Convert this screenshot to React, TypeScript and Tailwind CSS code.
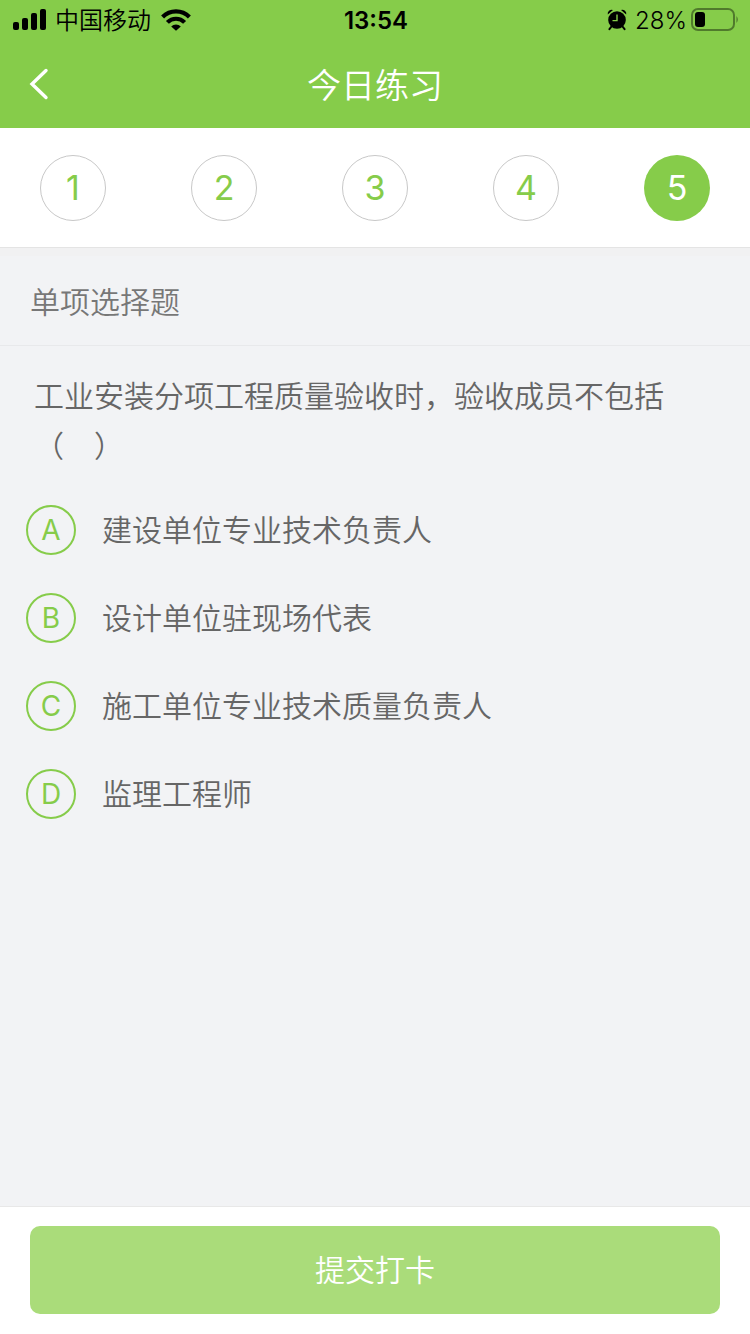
import { useState } from 'react'

const questions = [1, 2, 3, 4, 5]

const options = [
  { key: 'A', text: '建设单位专业技术负责人' },
  { key: 'B', text: '设计单位驻现场代表' },
  { key: 'C', text: '施工单位专业技术质量负责人' },
  { key: 'D', text: '监理工程师' }
]

function SignalIcon() {
  return (
    <svg width="34" height="22" viewBox="0 0 34 22" aria-hidden="true">
      <rect x="0" y="13" width="6" height="8" rx="2" />
      <rect x="9" y="9" width="6" height="12" rx="2" />
      <rect x="18" y="4" width="6" height="17" rx="2" />
      <rect x="27" y="0" width="6" height="21" rx="2" />
    </svg>
  )
}

function WifiIcon() {
  return (
    <svg width="30" height="22" viewBox="0 0 30 22" aria-hidden="true">
      <g fill="none" stroke="#000" strokeWidth="4.2">
        <path d="M1.6 8 A19 19 0 0 1 28.4 8" />
        <path d="M6.4 13.4 A12 12 0 0 1 23.6 13.4" />
      </g>
      <path d="M15 21.8 L10.2 17.4 A6.8 6.8 0 0 1 19.8 17.4 Z" />
    </svg>
  )
}

function AlarmIcon() {
  return (
    <svg width="20" height="22" viewBox="0 0 20 22" aria-hidden="true">
      <circle cx="10" cy="11" r="8.8" />
      <path d="M0.8 5.6 A4 4 0 0 1 6 0.9 Z M19.2 5.6 A4 4 0 0 0 14 0.9 Z" />
      <path d="M4.5 17.5 L2.4 20.2 M15.5 17.5 L17.6 20.2" stroke="#000" strokeWidth="2" strokeLinecap="round" />
      <path d="M10 5.5 V11.6 H5.5" fill="none" stroke="#86cc4a" strokeWidth="1.4" />
    </svg>
  )
}

function BatteryIcon() {
  return (
    <svg width="48" height="24" viewBox="0 0 48 24" aria-hidden="true">
      <rect x="1" y="1" width="42" height="21" rx="6" fill="none" stroke="#000" strokeOpacity="0.4" strokeWidth="2" />
      <rect x="4" y="4" width="10" height="15" rx="3" />
      <path d="M45.5 8 Q48 11.5 45.5 15 Z" fillOpacity="0.45" />
    </svg>
  )
}

function StatusBar() {
  return (
    <div className="grid h-10 grid-cols-[1fr_auto_1fr] items-center pl-[13px] pr-[11px] text-2xl leading-8 text-black">
      <div className="flex items-center gap-2">
        <SignalIcon />
        <span className="pr-[2px] pt-[2px] font-[350]">中国移动</span>
        <WifiIcon />
      </div>
      <span className="pt-[2px] font-semibold">13:54</span>
      <div className="flex items-center justify-end gap-1">
        <AlarmIcon />
        <span className="ml-1 pt-[2px] font-[350]">28%</span>
        <BatteryIcon />
      </div>
    </div>
  )
}

export default function App() {
  const [current, setCurrent] = useState(5)
  const [answer, setAnswer] = useState('')

  return (
    <div className="flex min-h-screen flex-col bg-[#f2f3f5] font-['Inter','Noto_Sans_CJK_SC',sans-serif] font-[350] text-[#666]">
      <header className="bg-[#86cc4a]">
        <StatusBar />
        <div className="grid h-[88px] grid-cols-[1fr_auto_1fr] items-center px-7">
          <button type="button" aria-label="返回" className="justify-self-start">
            <svg width="22" height="32" viewBox="0 0 22 32" aria-hidden="true">
              <path d="M18 2.5 L4 16 L18 29.5" fill="none" stroke="#fff" strokeWidth="3.4" strokeLinecap="round" />
            </svg>
          </button>
          <h1 className="pt-[2px] text-[34px] font-[350] text-white">今日练习</h1>
        </div>
      </header>

      <nav className="flex h-[120px] items-center justify-between border-b border-[#e4e4e4] bg-white px-10">
        {questions.map((n) => (
          <button
            key={n}
            type="button"
            onClick={() => setCurrent(n)}
            className={
              n === current
                ? 'size-[66px] rounded-full bg-[#86cc4a] text-[34px] font-normal text-white'
                : 'size-[66px] rounded-full border border-[#c8c8c8] text-[34px] font-normal text-[#86cc4a]'
            }
          >
            {n}
          </button>
        ))}
      </nav>

      <main className="flex-1">
        <h2
          id="question-type"
          className="flex h-[98px] items-center border-b border-t-8 border-b-[#e8e9eb] border-t-[#f1f1f2] px-[30px] pt-1 text-[30px] font-[350] text-[#777]"
        >
          单项选择题
        </h2>

        <div role="radiogroup" aria-labelledby="question-type" className="px-[26px] pt-[25px]">
          <p className="px-2 text-[30px] leading-[50px]">
            工业安装分项工程质量验收时，验收成员不包括<br />（　）
          </p>
          <div className="flex flex-col gap-[38px] pt-[34px]">
            {options.map((option) => (
              <label key={option.key} className="flex items-center gap-[26px] text-[30px] leading-[50px]">
                <span className="grid size-[50px] place-items-center">
                  <input
                    type="radio"
                    name="answer"
                    value={option.key}
                    checked={answer === option.key}
                    onChange={() => setAnswer(option.key)}
                    className="peer col-start-1 row-start-1 size-[50px] appearance-none rounded-full border-2 border-[#86cc4a] checked:bg-[#86cc4a]"
                  />
                  <span className="col-start-1 row-start-1 text-[28px] font-normal text-[#86cc4a] peer-checked:text-white">
                    {option.key}
                  </span>
                </span>
                <span>{option.text}</span>
              </label>
            ))}
          </div>
        </div>
      </main>

      <footer className="border-t border-[#e8e8e8] bg-white px-[30px] pb-5 pt-[19px]">
        <button type="button" className="h-[88px] w-full rounded-[10px] bg-[#aadc7a] text-[30px] font-[350] text-white">
          提交打卡
        </button>
      </footer>
    </div>
  )
}
